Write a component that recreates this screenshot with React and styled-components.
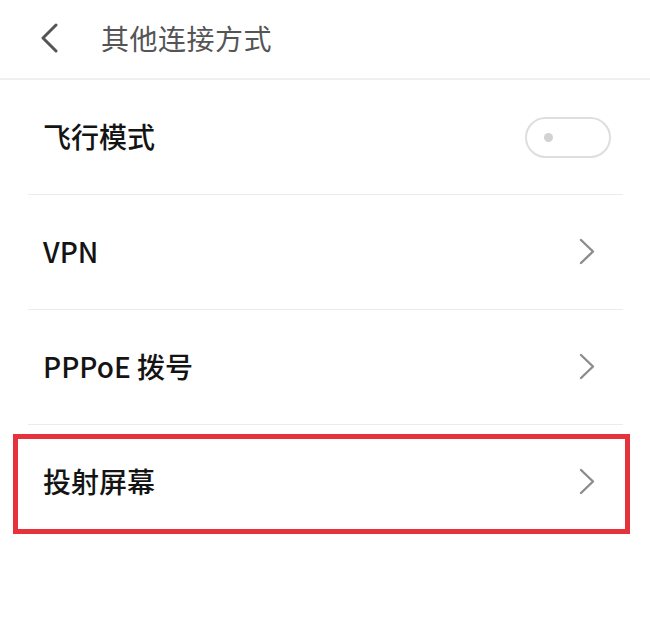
import styled, { createGlobalStyle } from "styled-components";

const GlobalStyle = createGlobalStyle`
  html, body {
    margin: 0;
    padding: 0;
    background: #ffffff;
  }
  body {
    font-family: "Noto Sans CJK SC", "Noto Sans", sans-serif;
  }
`;

const rows = [
  { label: "飞行模式", type: "toggle" },
  { label: "VPN", type: "link" },
  { label: "PPPoE 拨号", type: "link" },
  { label: "投射屏幕", type: "link", marked: true },
];

function BackIcon() {
  return (
    <svg width="20" height="30" viewBox="0 0 20 30">
      <polyline
        points="17,2 4,15 17,28"
        fill="none"
        stroke="#555"
        strokeWidth="3"
        strokeLinecap="round"
        strokeLinejoin="round"
      />
    </svg>
  );
}

function ChevronIcon() {
  return (
    <svg width="16" height="27" viewBox="0 0 16 27">
      <polyline
        points="2,2 14,13.5 2,25"
        fill="none"
        stroke="#8c8c8c"
        strokeWidth="2.4"
        strokeLinecap="round"
        strokeLinejoin="round"
      />
    </svg>
  );
}

function App() {
  return (
    <Page>
      <GlobalStyle />
      <Header>
        <BackIcon />
        <Title>其他连接方式</Title>
      </Header>

      <List>
        {rows.map((row, i) => (
          <Row key={row.label} last={i === rows.length - 1}>
            <Label>{row.label}</Label>
            {row.type === "toggle" ? (
              <Toggle>
                <Knob />
              </Toggle>
            ) : (
              <Arrow>
                <ChevronIcon />
              </Arrow>
            )}
            {row.marked && <Highlight />}
          </Row>
        ))}
      </List>
    </Page>
  );
}

const Page = styled.div`
  width: 650px;
  height: 641px;
  background: #fff;
  overflow: hidden;
`;

const Header = styled.div`
  display: flex;
  align-items: center;
  box-sizing: border-box;
  height: 80px;
  padding: 0 0 2px 39px;
  border-bottom: 2px solid #efefef;
`;

const Title = styled.div`
  margin-left: 42px;
  font-size: 28px;
  color: #555;
  letter-spacing: 0.5px;
`;

const List = styled.div`
  margin: 0 27px 0 28px;
`;

const Row = styled.div`
  position: relative;
  display: flex;
  align-items: center;
  justify-content: space-between;
  height: 114px;
  padding-left: 15px;
  border-bottom: ${(p) => (p.last ? "none" : "1px solid #ececec")};
`;

const Label = styled.div`
  font-size: 28px;
  font-weight: 500;
  color: #141414;
  line-height: 1;
  margin-top: -3px;
`;

const Toggle = styled.div`
  width: 86px;
  height: 41px;
  margin-right: 12px;
  border: 2px solid #dedede;
  border-radius: 21px;
  box-sizing: border-box;
  display: flex;
  align-items: center;
  padding-left: 17px;
`;

const Knob = styled.div`
  width: 9px;
  height: 9px;
  border-radius: 50%;
  background: #d2d2d2;
`;

const Arrow = styled.div`
  display: flex;
  align-items: center;
  margin-right: 28px;
  margin-top: -2px;
`;

const Highlight = styled.div`
  position: absolute;
  left: -15px;
  right: -7px;
  top: 9px;
  bottom: 5px;
  border: 5px solid #e6323a;
  pointer-events: none;
`;

export default App;
